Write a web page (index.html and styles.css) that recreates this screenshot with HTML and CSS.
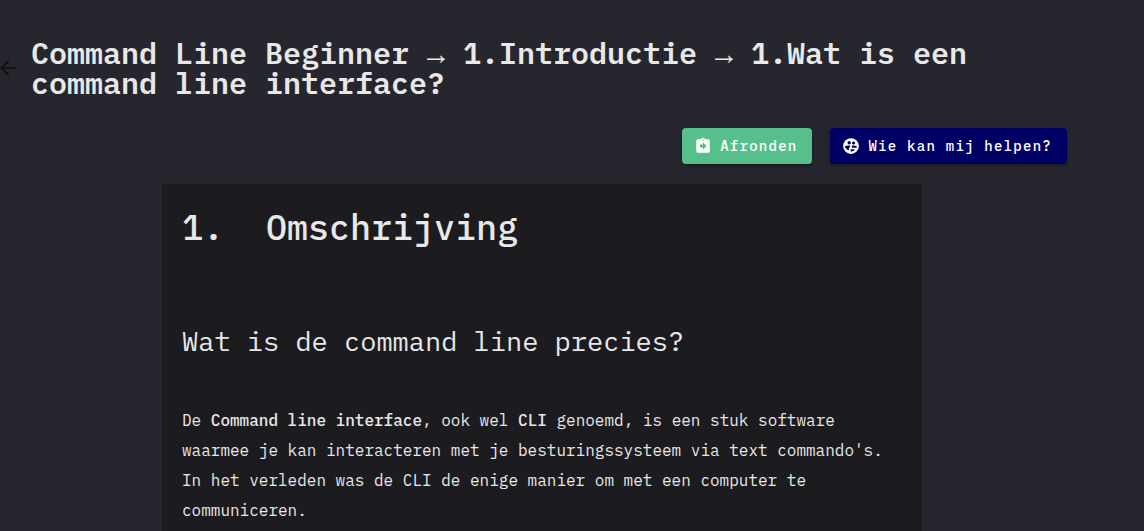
FILE: index.html
```html
<!DOCTYPE html>
<html lang="nl">
<head>
<meta charset="utf-8">
<meta name="viewport" content="width=device-width, initial-scale=1">
<title>Wat is een command line interface?</title>
<link rel="stylesheet" href="styles.css">
</head>
<body>
<header class="page-header">
  <a class="back-link" href="#" aria-label="Terug">
    <svg viewBox="0 0 24 24" aria-hidden="true"><path d="M20,11V13H8L13.5,18.5L12.08,19.92L4.16,12L12.08,4.08L13.5,5.5L8,11H20Z"/></svg>
  </a>
  <h1 class="page-title">Command Line Beginner <span class="arrow">→</span> 1.Introductie <span class="arrow">→</span> 1.Wat is een command line interface?</h1>
</header>
<div class="actions">
  <button class="btn btn-finish" type="button">
    <svg class="btn-icon" viewBox="0 0 24 24" aria-hidden="true"><path d="M19,3H14.82C14.4,1.84 13.3,1 12,1C10.7,1 9.6,1.84 9.18,3H5A2,2 0 0,0 3,5V19A2,2 0 0,0 5,21H19A2,2 0 0,0 21,19V5A2,2 0 0,0 19,3M12,3A1,1 0 0,1 13,4A1,1 0 0,1 12,5A1,1 0 0,1 11,4A1,1 0 0,1 12,3M12,17V14H8V10H12V7L17,12L12,17Z"/></svg>
    Afronden
  </button>
  <button class="btn btn-help" type="button">
    <svg class="btn-icon" viewBox="0 0 24 24" aria-hidden="true"><circle cx="12" cy="12" r="10.5"/><g class="icon-cutout"><circle cx="9.6" cy="7.6" r="2.3"/><circle cx="15.4" cy="8" r="2.1"/><path d="M4,12.4C5.5,11.2 8,11 10.8,11.4V13C9.6,13.8 9.2,15.2 9.2,17.6C6.2,17 4.2,15.2 4,12.4Z"/><path d="M13.2,11.6C15.6,11.2 18,11.4 20,12.6C19.8,13.6 19.4,14.2 18.8,14.4H13.2Z"/><path d="M11.6,16.2H17.2C16.2,18 14.2,19.2 11.6,19.4Z"/></g></svg>
    Wie kan mij helpen?
  </button>
</div>
<main class="card">
  <h2 class="section-title"><span>1.</span><span>Omschrijving</span></h2>
  <h3 class="subtitle">Wat is de command line precies?</h3>
  <p class="text">De <strong>Command line interface</strong>, ook wel <strong>CLI</strong> genoemd, is een stuk software waarmee je kan interacteren met je besturingssysteem via text commando's. In het verleden was de CLI de enige manier om met een computer te communiceren.</p>
</main>
</body>
</html>
```
FILE: styles.css
```css
* {
  box-sizing: border-box;
}

body {
  display: flex;
  flex-direction: column;
  min-height: 100vh;
  margin: 0;
  padding-top: 38px;
  background: #26262f;
  color: #e8e8e8;
  font-family: "IBM Plex Mono", "Liberation Mono", monospace;
  font-size: 16px;
}

h1,
h2,
h3,
p {
  margin: 0;
}

.page-header {
  display: flex;
  align-items: center;
  gap: 11px;
  padding-right: 77px;
}

.back-link {
  flex: none;
  display: flex;
  margin-left: -4px;
}

.back-link svg {
  width: 24px;
  height: 24px;
  fill: #121216;
}

.page-title {
  font-size: 30px;
  line-height: 30px;
  font-weight: 600;
}

.arrow {
  font-family: "Liberation Mono", monospace;
  font-weight: 400;
  line-height: 1px;
}

.actions {
  display: flex;
  justify-content: flex-end;
  gap: 18px;
  padding: 30px 77px 20px 0;
}

.btn {
  display: flex;
  align-items: center;
  gap: 8px;
  height: 36px;
  padding: 0 15px 0 12px;
  border: 0;
  border-radius: 4px;
  color: #ffffff;
  font-family: inherit;
  font-size: 14px;
  font-weight: 500;
  letter-spacing: 0.09em;
  box-shadow: 0 2px 4px rgba(0, 0, 0, 0.35);
}

.btn-finish {
  background: #56bf8c;
}

.btn-help {
  background: #000064;
}

.btn-icon {
  width: 18px;
  height: 18px;
  fill: currentColor;
}

.icon-cutout {
  fill: #000064;
}

.card {
  flex: 1;
  width: 100%;
  max-width: 760px;
  margin-left: 162px;
  padding: 20px 20px 0;
  background: #1c1b1f;
}

.section-title {
  display: flex;
  gap: 42px;
  font-size: 35px;
  line-height: 46px;
  font-weight: 500;
}

.subtitle {
  margin-top: 71px;
  font-size: 27px;
  line-height: 40px;
  font-weight: 400;
}

.text {
  margin-top: 44px;
  line-height: 30px;
}

.text strong {
  font-weight: 500;
}
```
